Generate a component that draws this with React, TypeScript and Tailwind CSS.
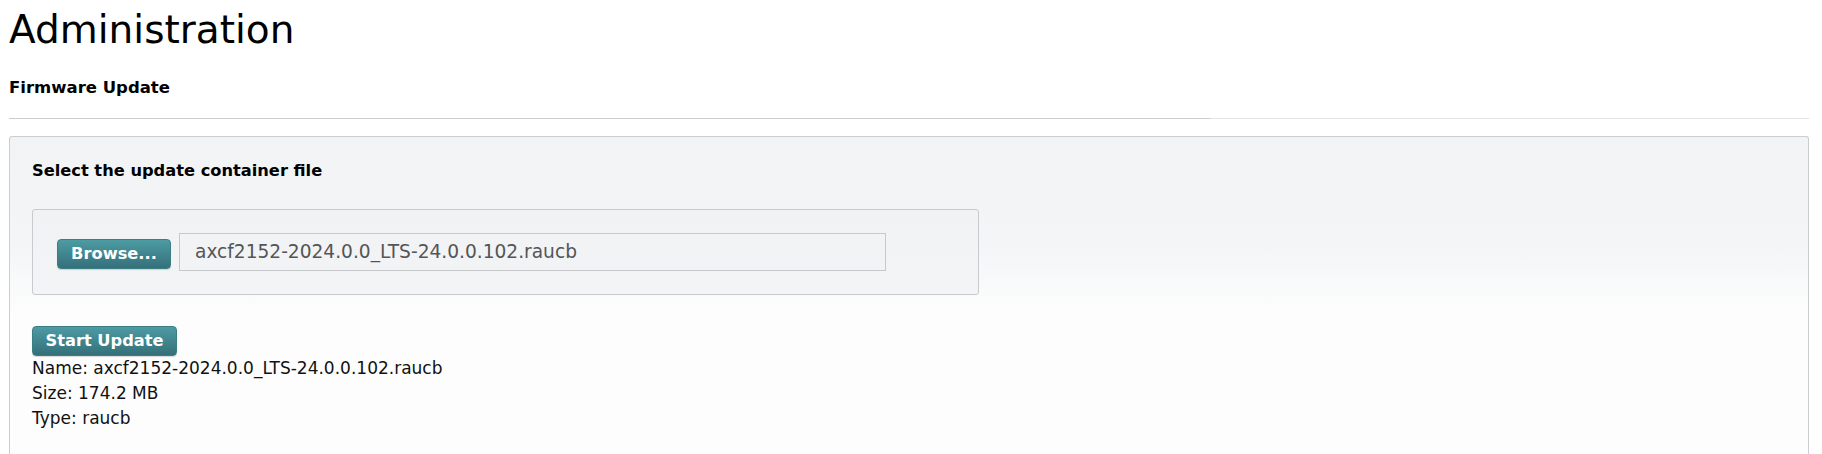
import React from "react";

const font = { fontFamily: '"DejaVu Sans", Verdana, sans-serif' };

function TealButton({ children, className = "" }: { children: React.ReactNode; className?: string }) {
  return (
    <button
      type="button"
      className={
        "block h-[30px] whitespace-nowrap rounded-[4px] border border-[#3c7d86] bg-[linear-gradient(to_bottom,#4d9ba3,#35707a)] px-0 text-center text-[16.25px] font-bold leading-[28px] text-white shadow-[0_1px_1px_rgba(0,0,0,0.15)] " +
        className
      }
    >
      {children}
    </button>
  );
}

export default function App() {
  return (
    <div className="min-h-[454px] w-[1822px] overflow-hidden bg-white text-[#111]" style={font}>
      <div className="pl-[9px] pt-[7px]">
        <h1 className="text-[39px] font-normal leading-[46px] text-black">Administration</h1>
        <h2 className="mt-[25px] text-[16.5px] font-bold leading-[20px] text-black">Firmware Update</h2>
      </div>
      <div className="ml-[9px] mt-[20px] h-px w-[1800px] bg-[linear-gradient(to_right,#cccccc_66.7%,#e2e2e6_66.7%)]" />
      <div className="ml-[9px] mt-[17px] h-[330px] w-[1800px] rounded-t-[3px] border border-b-0 border-[#cbcdd0] bg-[linear-gradient(to_bottom,#f2f3f5_0px,#f4f5f7_110px,#fafbfb_160px,#fdfdfd_178px,#fdfdfd_100%)] pl-[22px] pt-[24px]">
        <div className="text-[16.25px] font-bold leading-[20px] text-black">Select the update container file</div>
        <div className="mt-[28px] flex h-[86px] w-[947px] items-center rounded-[3px] border border-[#c9cacd] bg-[linear-gradient(to_bottom,#f1f2f4,#f3f4f6)] pl-[24px]">
          <TealButton className="mt-[4px] w-[114px]">Browse...</TealButton>
          <div className="ml-[8px] flex h-[38px] w-[707px] items-center border border-[#c8c9cc] bg-[#f2f3f5] pl-[15px] text-[18.6px] text-[#555]">
            axcf2152-2024.0.0_LTS-24.0.0.102.raucb
          </div>
        </div>
        <TealButton className="mt-[31px] w-[145px]">Start Update</TealButton>
        <div className="text-[17px] leading-[25px] text-[#111]">
          <div>Name: axcf2152-2024.0.0_LTS-24.0.0.102.raucb</div>
          <div>Size: 174.2 MB</div>
          <div>Type: raucb</div>
        </div>
      </div>
    </div>
  );
}
